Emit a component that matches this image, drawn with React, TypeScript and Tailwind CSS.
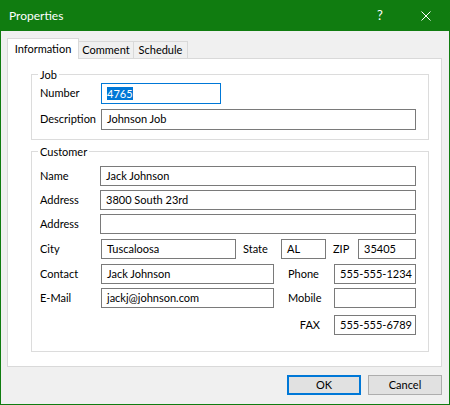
import { ReactNode } from 'react'

function TextBox({ value, className = '' }: { value?: string; className?: string }) {
  return (
    <div
      className={`flex h-[20px] items-center overflow-hidden whitespace-nowrap border border-[#7a7a7a] bg-white pl-[5px] text-black ${className}`}
    >
      {value}
    </div>
  )
}

function Label({ children, className = 'w-[61px]' }: { children: ReactNode; className?: string }) {
  return <div className={`shrink-0 whitespace-nowrap ${className}`}>{children}</div>
}

function GroupBox({ title, className = '', children }: { title: string; className?: string; children: ReactNode }) {
  return (
    <fieldset className={`border border-[#dcdcdc] pl-[8px] pr-[12px] ${className}`}>
      <legend className="-ml-[2px] px-[2px] leading-[15px]">{title}</legend>
      {children}
    </fieldset>
  )
}

export default function App() {
  return (
    <div className="flex h-[405px] w-[450px] flex-col border border-[#107c10] font-['Lato',sans-serif] text-[11px] text-black">
      {/* Title bar */}
      <div className="flex h-[30px] shrink-0 items-center bg-[#107c10] pl-[8px] text-[12px] text-white">
        <span>Properties</span>
        <div className="ml-auto flex h-full">
          <div className="flex w-[46px] items-center justify-center text-[13px]">?</div>
          <div className="flex w-[46px] items-center justify-center">
            <svg width="10" height="10" viewBox="0 0 10 10" fill="none" stroke="white" strokeWidth="1">
              <path d="M0.5 0.5 L9.5 9.5 M9.5 0.5 L0.5 9.5" />
            </svg>
          </div>
        </div>
      </div>

      {/* Body */}
      <div className="flex flex-1 flex-col bg-[#f0f0f0] pb-[9px] pl-[6px] pr-[7px] pt-[7px]">
        {/* Tabs */}
        <div className="flex h-[20px] items-end">
          <div className="relative z-10 -mb-px flex h-[21px] w-[72px] items-center justify-center border-x border-t border-[#d9d9d9] bg-white">
            Information
          </div>
          <div className="flex h-[17px] w-[55px] items-center justify-center border-r border-t border-[#d9d9d9] bg-[#f0f0f0]">
            Comment
          </div>
          <div className="flex h-[17px] w-[54px] items-center justify-center border-r border-t border-[#d9d9d9] bg-[#f0f0f0]">
            Schedule
          </div>
        </div>

        {/* Tab page */}
        <div className="flex flex-col border border-[#d9d9d9] bg-white pb-[14px] pl-[23px] pr-[12px] pt-[8px]">
          <GroupBox title="Job" className="pb-[9px] pt-[1px]">
            <div className="flex flex-col gap-[5px]">
              <div className="flex items-center">
                <Label>Number</Label>
                <div className="flex h-[21px] w-[120px] items-center border border-[#0078d7] bg-white pl-[5px]">
                  <span className="bg-[#0078d7] leading-[13px] text-white">4765</span>
                </div>
              </div>
              <div className="flex items-center">
                <Label>Description</Label>
                <TextBox value="Johnson Job" className="h-[21px] flex-1" />
              </div>
            </div>
          </GroupBox>

          <GroupBox title="Customer" className="mt-[4px] pb-[16px] pt-[7px]">
            <div className="flex flex-col gap-[4px]">
              <div className="flex items-center">
                <Label className="w-[60px]">Name</Label>
                <TextBox value="Jack Johnson" className="flex-1" />
              </div>
              <div className="flex items-center">
                <Label className="w-[60px]">Address</Label>
                <TextBox value="3800 South 23rd" className="flex-1" />
              </div>
              <div className="flex items-center">
                <Label className="w-[60px]">Address</Label>
                <TextBox className="flex-1" />
              </div>
              <div className="mt-[1px] flex items-center">
                <Label>City</Label>
                <TextBox value="Tuscaloosa" className="w-[135px]" />
                <Label className="ml-[7px] w-[38px]">State</Label>
                <TextBox value="AL" className="w-[45px]" />
                <Label className="ml-[7px] w-[25px]">ZIP</Label>
                <TextBox value="35405" className="flex-1" />
              </div>
              <div className="mt-[1px] flex items-center">
                <Label>Contact</Label>
                <TextBox value="Jack Johnson" className="w-[173px]" />
                <Label className="ml-[14px] w-[46px]">Phone</Label>
                <TextBox value="555-555-1234" className="flex-1" />
              </div>
              <div className="flex items-center">
                <Label>E-Mail</Label>
                <TextBox value="jackj@johnson.com" className="w-[173px]" />
                <Label className="ml-[14px] w-[46px]">Mobile</Label>
                <TextBox className="flex-1" />
              </div>
              <div className="mt-[3px] flex items-center justify-end">
                <Label className="pr-[14px]">FAX</Label>
                <TextBox value="555-555-6789" className="w-[82px]" />
              </div>
            </div>
          </GroupBox>
        </div>

        {/* Buttons */}
        <div className="mt-[8px] flex justify-end gap-[7px]">
          <button className="flex h-[20px] w-[74px] items-center justify-center border-2 border-[#0078d7] bg-[#e1e1e1]">
            OK
          </button>
          <button className="flex h-[20px] w-[74px] items-center justify-center border border-[#adadad] bg-[#e1e1e1]">
            Cancel
          </button>
        </div>
      </div>
    </div>
  )
}
